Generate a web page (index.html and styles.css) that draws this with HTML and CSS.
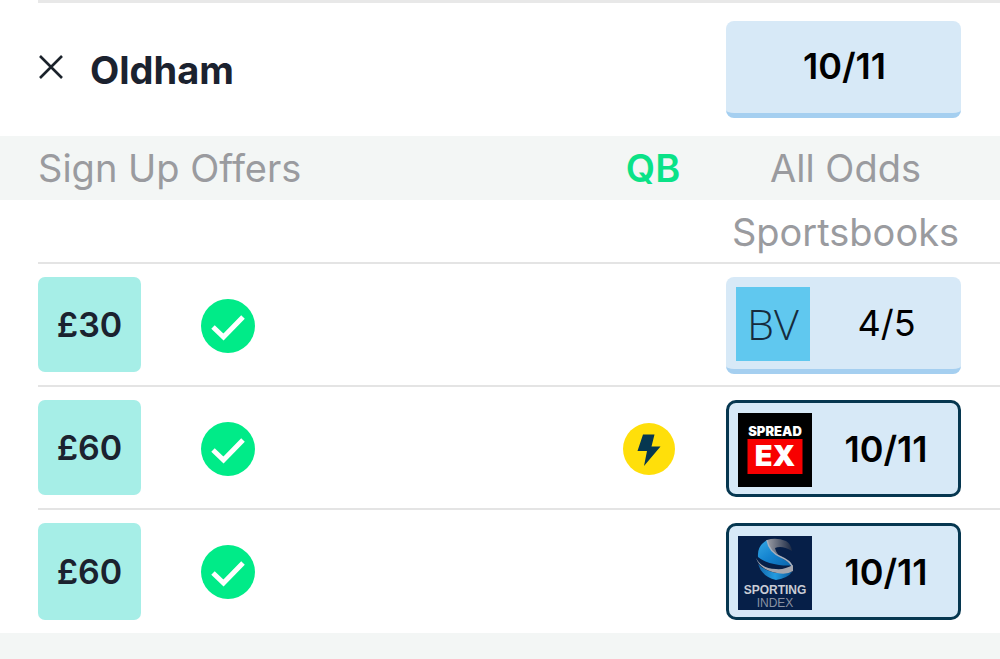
FILE: index.html
```html
<!DOCTYPE html>
<html lang="en">
<head>
<meta charset="utf-8">
<meta name="viewport" content="width=device-width, initial-scale=1">
<title>Oldham odds</title>
<link rel="stylesheet" href="styles.css">
</head>
<body>
<svg class="defs" aria-hidden="true">
  <symbol id="tick" viewBox="0 0 54 54">
    <circle cx="27" cy="27" r="27" fill="#00eb88"/>
    <path d="M12 28 22.500 38 42 18" fill="none" stroke="#fff" stroke-width="5"/>
  </symbol>
</svg>
<main>
  <section class="selection">
    <button class="close" type="button" aria-label="Close">
      <svg width="26" height="26" viewBox="0 0 26 26" aria-hidden="true"><path d="M2 2 24 24M24 2 2 24" fill="none" stroke="#1b222b" stroke-width="2.600"/></svg>
    </button>
    <h1 class="team">Oldham</h1>
    <button class="odds best" type="button"><span class="price">10/11</span></button>
  </section>
  <header class="columns">
    <span>Sign Up Offers</span>
    <span class="qb">QB</span>
    <span class="all">All Odds</span>
  </header>
  <h2 class="group">Sportsbooks</h2>
  <ul class="books">
    <li class="book">
      <button class="offer" type="button">£30</button>
      <svg class="tick" role="img" aria-label="Available"><use href="#tick"/></svg>
      <button class="odds" type="button">
        <svg class="logo" viewBox="0 0 74 74" role="img" aria-label="BV">
          <rect width="74" height="74" fill="#60c8ef"/>
          <text class="bv" x="37" y="53">BV</text>
        </svg>
        <span class="price">4/5</span>
      </button>
    </li>
    <li class="book">
      <button class="offer" type="button">£60</button>
      <svg class="tick" role="img" aria-label="Available"><use href="#tick"/></svg>
      <svg class="bolt" viewBox="0 0 52 52" role="img" aria-label="Quick bet">
        <circle cx="26" cy="26" r="26" fill="#ffdf0a"/>
        <path d="M20 11.500H31.500L28.500 23.500H37.500L21 43L24 28H14.500Z" fill="#063750"/>
      </svg>
      <button class="odds best picked" type="button">
        <svg class="logo" viewBox="0 0 74 74" role="img" aria-label="Spreadex">
          <rect width="74" height="74" fill="#000"/>
          <rect x="9.500" y="26" width="55" height="35" fill="#f80000"/>
          <text class="spread" x="37" y="23">SPREAD</text>
          <text class="ex" x="37" y="53">EX</text>
        </svg>
        <span class="price">10/11</span>
      </button>
    </li>
    <li class="book">
      <button class="offer" type="button">£60</button>
      <svg class="tick" role="img" aria-label="Available"><use href="#tick"/></svg>
      <button class="odds best picked" type="button">
        <svg class="logo" viewBox="0 0 74 74" role="img" aria-label="Sporting Index">
          <defs>
            <linearGradient id="blue" x1="0" y1="0" x2="1" y2="1"><stop offset="0" stop-color="#35a8e4"/><stop offset=".5" stop-color="#1483cf"/><stop offset="1" stop-color="#0a65ad"/></linearGradient>
            <linearGradient id="grey"><stop offset="0" stop-color="#9b9da5"/><stop offset="1" stop-color="#1b2944"/></linearGradient>
            <linearGradient id="low"><stop offset="0" stop-color="#1265a8"/><stop offset=".5" stop-color="#239be0"/><stop offset="1" stop-color="#0b599b"/></linearGradient>
          </defs>
          <rect width="74" height="74" fill="#061f48"/>
          <path d="M29 4Q38 1 48 5Q53 8 54 15Q44 9 37 12Q38 17 44 23Q31 17 29 4Z" fill="url(#grey)"/>
          <path d="M29 4Q19 10 20 21Q27 27 41 29Q50 30 54 29Q51 26 45 23Q31 16 29 4Z" fill="url(#blue)"/>
          <path d="M29 4Q31 16 43 21Q52 25 54 30" fill="none" stroke="#a6b0bf" stroke-width="1.500"/>
          <path d="M20 28Q27 35 38 37L54 36Q50 42 38 44Q24 41 20 28Z" fill="url(#low)"/>
          <path d="M18 22Q24 33 38 33Q46 34 55 29V35Q49 39 39 37Q22 34 18 22Z" fill="#a4a6ae"/>
          <text class="sporting" x="37" y="58">SPORTING</text>
          <text class="index" x="37" y="71">INDEX</text>
        </svg>
        <span class="price">10/11</span>
      </button>
    </li>
  </ul>
</main>
</body>
</html>
```
FILE: styles.css
```css
* { box-sizing: border-box; }
body {
  margin: 0;
  background: #f3f6f5;
  color: #1b222f;
  font-family: Inter, "Liberation Sans", sans-serif;
}
button {
  margin: 0;
  padding: 0;
  border: 0;
  background: none;
  color: inherit;
  font: inherit;
  cursor: pointer;
}
svg { display: block; }
.defs { position: absolute; width: 0; height: 0; }
main { background: #fff; }

.selection {
  display: flex;
  align-items: center;
  gap: 26px;
  margin-left: 38px;
  padding: 18px 39px 18px 0;
  border-top: 3px solid #e8e8e8;
}
.close { padding-bottom: 6px; }
.team {
  flex: 1;
  margin: 0;
  font-size: 38px;
  line-height: 44px;
  font-weight: 700;
}

.columns, .book {
  display: grid;
  grid-template-columns: 103px 54px 1fr 60px 235px;
}
.columns {
  align-items: center;
  padding: 0 39px 0 38px;
  column-gap: 43px;
  background: #f3f6f5;
  color: #9a9b9f;
  font-size: 38px;
  line-height: 64px;
}
.columns span:first-child { grid-column: 1 / 4; }
.columns .qb {
  grid-column: 4;
  justify-self: center;
  color: #0ae287;
  font-weight: 600;
}
.all { padding-left: 4px; text-align: center; }
.group {
  width: 235px;
  margin: 0 39px 0 auto;
  padding: 2px 0 0 4px;
  color: #9a9b9f;
  font-size: 38px;
  line-height: 60px;
  font-weight: 400;
  text-align: center;
  white-space: nowrap;
}

.books {
  margin: 0 0 0 38px;
  padding: 0 0 2px;
  list-style: none;
}
.book {
  align-items: center;
  column-gap: 43px;
  padding: 13px 39px 11px 0;
  border-top: 2px solid #e4e4e4;
}
.offer {
  align-self: start;
  height: 95px;
  border-radius: 7px;
  background: #a6eee7;
  font-size: 34px;
  line-height: 40px;
  font-weight: 600;
}
.book:last-child .offer { height: 97px; }
.tick { width: 54px; height: 54px; margin-left: 17px; }
.bolt { grid-column: 4; width: 52px; height: 52px; }
.odds {
  display: flex;
  align-items: center;
  width: 235px;
  height: 97px;
  padding: 2px 0 0 10px;
  border-bottom: 5px solid #a5cff0;
  border-radius: 8px;
  background: #d7e9f7;
  color: #000;
  font-size: 36px;
  line-height: 44px;
}
.book .odds { grid-column: 5; }
.selection .odds { padding: 0; }
.best { font-weight: 600; }
.book .picked {
  padding-left: 9px;
  border: 3px solid #063750;
  border-radius: 10px;
}
.price { flex: 1; padding: 0 0 2px 2px; text-align: center; }
.logo { width: 74px; height: 74px; }
.logo text { text-anchor: middle; fill: #fff; }
.bv { font: 300 43px "Open Sans", sans-serif; }
.logo .bv { fill: #162c3d; }
.spread { font: 900 13px Inter, sans-serif; }
.ex { font: 900 29px Inter, sans-serif; }
.sporting { font: 700 12px "Liberation Sans", sans-serif; }
.logo .sporting { fill: #c9ccd5; }
.index { font: 400 12px "Liberation Sans", sans-serif; }
.logo .index { fill: #8992a3; }
```
